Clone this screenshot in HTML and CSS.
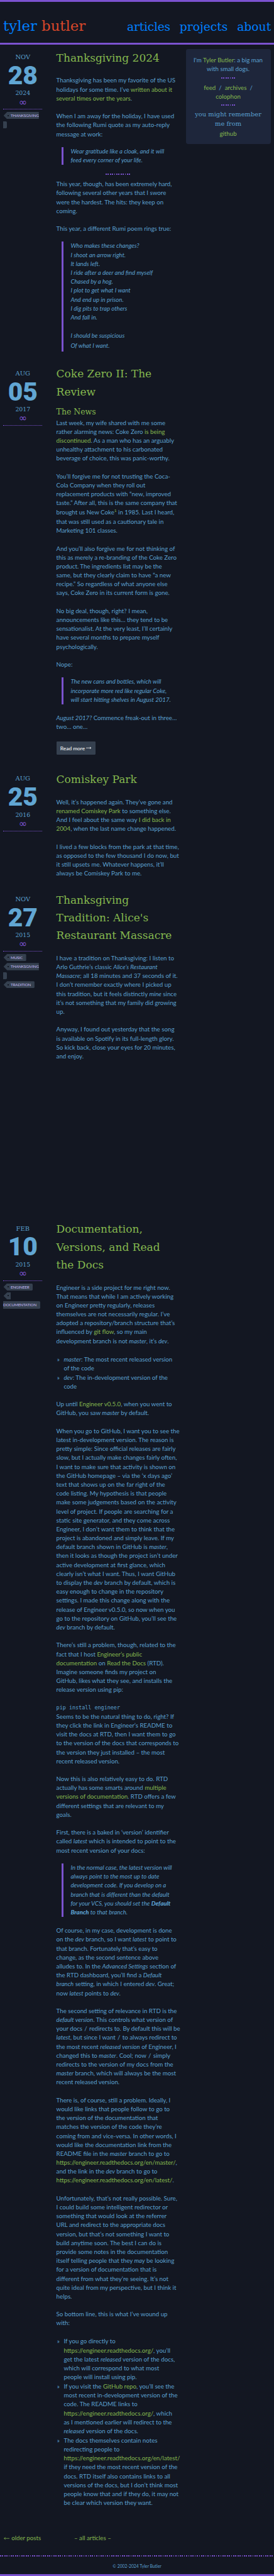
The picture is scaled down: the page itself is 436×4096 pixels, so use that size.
FILE: index.html
```
<!DOCTYPE html>
<html lang="en">
<head>
<meta charset="utf-8">
<title>tyler butler</title>
<link rel="stylesheet" href="styles.css">
</head>
<body>
<header class="site-header">
  <a class="brand">tyler <span class="brand-last">butler</span></a>
  <nav class="site-nav"><a class="nav-articles">articles</a><a class="nav-projects">projects</a><a class="nav-about">about</a></nav>
</header>

<div class="layout">
<main class="posts">

<article class="post post-thanksgiving">
  <aside class="meta">
    <div class="month">NOV</div><div class="day">28</div><div class="year">2024</div><a class="permalink">∞</a>
    <div class="tags"><span class="tag tag-cut">THANKSGIVING</span><span class="tag-end"></span></div>
  </aside>
  <div class="body">
    <h2>Thanksgiving 2024</h2>
    <p>Thanksgiving has been my favorite of the US<br>holidays for some time. I’ve <a>written about it<br>several times over the years</a>.</p>
    <p>When I am away for the holiday, I have used<br>the following Rumi quote as my auto-reply<br>message at work:</p>
    <blockquote><p>Wear gratitude like a cloak, and it will<br>feed every corner of your life.</p></blockquote>
    <hr class="dots">
    <p>This year, though, has been extremely hard,<br>following several other years that I swore<br>were the hardest. The hits: they keep on<br>coming.</p>
    <p>This year, a different Rumi poem rings true:</p>
    <blockquote class="poem"><p>Who makes these changes?<br>I shoot an arrow right.<br>It lands left.<br>I ride after a deer and find myself<br>Chased by a hog.<br>I plot to get what I want<br>And end up in prison.<br>I dig pits to trap others<br>And fall in.</p><p>I should be suspicious</p><p class="last-line">Of what I want.</p></blockquote>
  </div>
</article>

<article class="post post-coke">
  <aside class="meta">
    <div class="month">AUG</div><div class="day">05</div><div class="year">2017</div><a class="permalink">∞</a>
    <div class="tags"></div>
  </aside>
  <div class="body">
    <h2>Coke Zero II: The<br>Review</h2>
    <h3>The News</h3>
    <p>Last week, my wife shared with me some<br>rather alarming news: Coke Zero <a>is being<br>discontinued</a>. As a man who has an arguably<br>unhealthy attachment to his carbonated<br>beverage of choice, this was panic-worthy.</p>
    <p>You’ll forgive me for not trusting the Coca-<br>Cola Company when they roll out<br>replacement products with “new, improved<br>taste.” After all, this is the same company that<br><span class="noted">brought us New Coke<sup><a>1</a></sup> in 1985. Last I heard,</span>that was still used as a cautionary tale in<br>Marketing 101 classes.</p>
    <p>And you’ll also forgive me for not thinking of<br>this as merely a re-branding of the Coke Zero<br>product. The ingredients list may be the<br>same, but they clearly claim to have “a new<br>recipe.” So regardless of what anyone else<br>says, Coke Zero in its current form is gone.</p>
    <p>No big deal, though, right? I mean,<br>announcements like this… they tend to be<br>sensationalist. At the very least, I’ll certainly<br>have several months to prepare myself<br>psychologically.</p>
    <p>Nope:</p>
    <blockquote><p>The new cans and bottles, which will<br>incorporate more red like regular Coke,<br>will start hitting shelves in August 2017.</p></blockquote>
    <p><em>August 2017?</em> Commence freak-out in three…<br>two… one…</p>
    <a class="read-more"><span>Read more</span><svg class="arrow" viewBox="0 0 15 8"><path d="M0 4H14M10.5 1.5L14 4L10.5 6.5"/></svg></a>
  </div>
</article>

<article class="post post-comiskey">
  <aside class="meta">
    <div class="month">AUG</div><div class="day">25</div><div class="year">2016</div><a class="permalink">∞</a>
    <div class="tags"></div>
  </aside>
  <div class="body">
    <h2>Comiskey Park</h2>
    <p>Well, it’s happened again. They’ve gone and<br><a>renamed Comiskey Park</a> to something else.<br>And I feel about the same way <a>I did back in<br>2004</a>, when the last name change happened.</p>
    <p>I lived a few blocks from the park at that time,<br>as opposed to the few thousand I do now, but<br>it still upsets me. Whatever happens, it’ll<br>always be Comiskey Park to me.</p>
  </div>
</article>

<article class="post post-alice">
  <aside class="meta">
    <div class="month">NOV</div><div class="day">27</div><div class="year">2015</div><a class="permalink">∞</a>
    <div class="tags"><span class="tag">MUSIC</span><span class="tag tag-cut">THANKSGIVING</span><span class="tag-end"></span><span class="tag">TRADITION</span></div>
  </aside>
  <div class="body">
    <h2>Thanksgiving<br>Tradition: Alice's<br>Restaurant Massacre</h2>
    <p>I have a tradition on Thanksgiving: I listen to<br>Arlo Guthrie’s classic <em>Alice’s Restaurant<br>Massacre</em>; all 18 minutes and 37 seconds of it.<br>I don’t remember exactly where I picked up<br>this tradition, but it feels distinctly <em>mine</em> since<br>it’s not something that my family did growing<br>up.</p>
    <p>Anyway, I found out yesterday that the song<br>is available on Spotify in its full-length glory.<br>So kick back, close your eyes for 20 minutes,<br>and enjoy.</p>
  </div>
</article>

<article class="post post-docs">
  <aside class="meta">
    <div class="month">FEB</div><div class="day">10</div><div class="year">2015</div><a class="permalink">∞</a>
    <div class="tags"><span class="tag">ENGINEER</span><span class="tag tag-start"></span><span class="tag-end tag-end-text">DOCUMENTATION</span></div>
  </aside>
  <div class="body">
    <h2>Documentation,<br>Versions, and Read<br>the Docs</h2>
    <p>Engineer is a side project for me right now.<br>That means that while I am actively working<br>on Engineer pretty regularly, releases<br>themselves are not necessarily regular. I’ve<br>adopted a repository/branch structure that’s<br>influenced by <a>git flow</a>, so my main<br>development branch is not <em>master</em>, it’s <em>dev</em>.</p>
    <ul>
      <li><em>master</em>: The most recent released version<br>of the code</li>
      <li><em>dev</em>: The in-development version of the<br>code</li>
    </ul>
    <p>Up until <a>Engineer v0.5.0</a>, when you went to<br>GitHub, you saw <em>master</em> by default.</p>
    <p>When you go to GitHub, I want you to see the<br>latest in-development version. The reason is<br>pretty simple: Since official releases are fairly<br>slow, but I actually make changes fairly often,<br>I want to make sure that activity is shown on<br>the GitHub homepage – via the ‘x days ago’<br>text that shows up on the far right of the<br>code listing. My hypothesis is that people<br>make some judgements based on the activity<br>level of project. If people are searching for a<br>static site generator, and they come across<br>Engineer, I don’t want them to think that the<br>project is abandoned and simply leave. If my<br>default branch shown in GitHub is <em>master</em>,<br>then it looks as though the project isn’t under<br>active development at first glance, which<br>clearly isn’t what I want. Thus, I want GitHub<br>to display the <em>dev</em> branch by default, which is<br>easy enough to change in the repository<br>settings. I made this change along with the<br>release of Engineer v0.5.0, so now when you<br>go to the repository on GitHub, you’ll see the<br><em>dev</em> branch by default.</p>
    <p>There’s still a problem, though, related to the<br>fact that I host <a>Engineer’s public<br>documentation</a> on <a>Read the Docs</a> (RTD).<br>Imagine someone finds my project on<br>GitHub, likes what they see, and installs the<br>release version using pip:</p>
    <pre>pip install engineer</pre>
    <p class="after-code">Seems to be the natural thing to do, right? If<br>they click the link in Engineer’s README to<br>visit the docs at RTD, then I want them to go<br>to the version of the docs that corresponds to<br>the version they just installed – the most<br>recent released version.</p>
    <p>Now this is also relatively easy to do. RTD<br>actually has some smarts around <a>multiple<br>versions of documentation</a>. RTD offers a few<br>different settings that are relevant to my<br>goals.</p>
    <p>First, there is a baked in ‘version’ identifier<br>called <em>latest</em> which is intended to point to the<br>most recent version of your docs:</p>
    <blockquote><p>In the normal case, the latest version will<br>always point to the most up to date<br>development code. If you develop on a<br>branch that is different than the default<br>for your VCS, you should set the <strong>Default<br>Branch</strong> to that branch.</p></blockquote>
    <p>Of course, in my case, development is done<br>on the <em>dev</em> branch, so I want <em>latest</em> to point to<br>that branch. Fortunately that’s easy to<br>change, as the second sentence above<br>alludes to. In the <em>Advanced Settings</em> section of<br>the RTD dashboard, you’ll find a <em>Default<br>branch</em> setting, in which I entered <em>dev</em>. Great;<br>now <em>latest</em> points to <em>dev</em>.</p>
    <p>The second setting of relevance in RTD is the<br><em>default version</em>. This controls what version of<br>your docs <i class="slash">/</i> redirects to. By default this will be<br><em>latest</em>, but since I want <i class="slash">/</i> to always redirect to<br>the most recent <em>released version</em> of Engineer, I<br>changed this to <em>master</em>. Cool; now <i class="slash">/</i> simply<br>redirects to the version of my docs from the<br><em>master</em> branch, which will always be the most<br>recent released version.</p>
    <p>There is, of course, still a problem. Ideally, I<br>would like links that people follow to go to<br>the version of the documentation that<br>matches the version of the code they’re<br>coming from and vice-versa. In other words, I<br>would like the documentation link from the<br>README file in the <em>master</em> branch to go to<br><a>https://engineer.readthedocs.org/en/master/</a>,<br>and the link in the <em>dev</em> branch to go to<br><a>https://engineer.readthedocs.org/en/latest/</a>.</p>
    <p>Unfortunately, that’s not really possible. Sure,<br>I could build some intelligent redirector or<br>something that would look at the referrer<br>URL and redirect to the appropriate docs<br>version, but that’s not something I want to<br>build anytime soon. The best I can do is<br>provide some notes in the documentation<br>itself telling people that they <em>may</em> be looking<br>for a version of documentation that is<br>different from what they’re seeing. It’s not<br>quite ideal from my perspective, but I think it<br>helps.</p>
    <p>So bottom line, this is what I’ve wound up<br>with:</p>
    <ul>
      <li>If you go directly to<br><a>https://engineer.readthedocs.org/</a>, you’ll<br>get the latest <em>released</em> version of the docs,<br>which will correspond to what most<br>people will install using pip.</li>
      <li>If you visit the <a>GitHub repo</a>, you’ll see the<br>most recent in-development version of the<br>code. The README links to<br><a>https://engineer.readthedocs.org/</a>, which<br>as I mentioned earlier will redirect to the<br><em>released</em> version of the docs.</li>
      <li>The docs themselves contain notes<br>redirecting people to<br><a>https://engineer.readthedocs.org/en/latest/</a><br>if they need the most recent version of the<br>docs. RTD itself also contains links to all<br>versions of the docs, but I don’t think most<br>people know that and if they do, it may not<br>be clear which version they want.</li>
    </ul>
  </div>
</article>
</main>

<aside class="card">
  <p>I'm <a>Tyler Butler</a>: a big man<br>with small dogs.</p>
  <hr class="dots">
  <p><a>feed</a>&nbsp; / &nbsp;<a>archives</a>&nbsp; /<br><a>colophon</a></p>
  <hr class="dots">
  <p class="remember">you might remember<br>me from</p>
  <p><a>github</a></p>
</aside>
</div>

<div class="pager"><a class="older"><svg class="arrow" viewBox="0 0 17 8"><path d="M17 4H1M5 1L1 4L5 7"/></svg>older posts</a><a>– all articles –</a></div>
<footer class="site-footer">© 2002-2024 Tyler Butler</footer>
</body>
</html>
```
FILE: styles.css
```
/* 1rem = ten layout units */
html {
  font-size: 5.673px;
  background: #131722;
}

body {
  margin: 0;
  height: 4096px;
  box-sizing: border-box;
  border-top: 3px solid #7b52cf;
  border-bottom: 3px solid #7b52cf;
  display: flex;
  flex-direction: column;
  overflow: hidden;
  background: #131722;
  color: #5ba0d0;
  font-family: Lato, "Open Sans", sans-serif;
  font-size: 1.714rem;
  line-height: 2.5rem;
  white-space: nowrap;
}

h2, h3, p, ul, pre, blockquote, hr { margin: 0; padding: 0; }

a { color: #84b84e; }

blockquote { font-style: italic; font-size: 1.695rem; }

/* Inline runs keep out of the line box so every line stays 2.5rem tall */
em, strong, .slash { line-height: 0; }
em { font-style: italic; font-size: 1.695rem; }
strong { font-weight: 900; }

/* Header */
.site-header {
  flex: none;
  box-sizing: border-box;
  height: 11.9rem;
  border-bottom: 3px solid #7b52cf;
  display: flex;
  justify-content: space-between;
  align-items: baseline;
  padding: 4.15rem .85rem 0 .9rem;
  font-family: "DejaVu Serif", serif;
}

.site-header a { color: #007fff; }
.brand { font-size: 4.02rem; line-height: 5rem; }
.brand-last { color: #d8472a; }
.site-nav { display: flex; gap: 2.6rem; font-size: 3.3rem; line-height: 4rem; }
.nav-articles { letter-spacing: -.04rem; }

/* Layout */
.layout {
  flex: none;
  display: grid;
  grid-template-columns: 52.1rem 23.8rem;
  align-items: start;
  padding-top: 1.3rem;
  height: 697.6rem;
  box-sizing: border-box;
}

.post {
  display: grid;
  grid-template-columns: 11rem 1fr;
  column-gap: 3.9rem;
  padding-left: .9rem;
}

.post-thanksgiving { height: 88.6rem; }
.post-coke { height: 113.65rem; }
.post-comiskey { height: 33.75rem; }
.post-alice { height: 92.3rem; }

.body h2 {
  font: 400 3rem/5rem "DejaVu Serif", serif;
  color: #84b84e;
  margin-bottom: 2.5rem;
}

.body h3 {
  font: 400 2.2rem/2.5rem "DejaVu Serif", serif;
  color: #84b84e;
  margin: -.6rem 0 .45rem;
}

.body > p { margin-bottom: 2.5rem; }

blockquote {
  margin: 0 0 2.5rem 1.5rem;
  border-left: 3px solid #7b52cf;
  padding-left: 2rem;
}

.poem p + p { margin-top: 2.6rem; }
.poem .last-line { margin-top: .4rem; padding-bottom: .3rem; }

.dots {
  border: 0;
  height: 2px;
  width: 6.9rem;
  background: repeating-linear-gradient(90deg, #7b52cf 0 .3rem, transparent .3rem .6rem);
}

.body .dots { margin: 0 auto 1.2rem 13.8rem; }

.noted { display: block; height: 2.72rem; }
sup { font-size: 1.15rem; line-height: 0; vertical-align: .65rem; }

ul { list-style: none; padding-left: 2.1rem; margin-bottom: 2.5rem; }
li { padding-top: .12rem; }
li::before { content: "»"; float: left; margin-left: -1.9rem; }

pre {
  font: 1.487rem/2.5rem "DejaVu Sans Mono", monospace;
}

.slash { font-style: normal; padding: 0 .15rem; }

.read-more {
  display: inline-flex;
  align-items: center;
  gap: .4rem;
  height: 3.7rem;
  padding: 0 1.1rem;
  margin-top: .45rem;
  border-radius: .2rem;
  background: #35404f;
  color: #fff;
  font-size: 1.48rem;
}

.arrow { fill: none; stroke: currentColor; stroke-width: 1.3; }
.read-more .arrow { width: 1.5rem; height: .8rem; }

/* Date column */
.meta {
  text-align: center;
  padding-top: 1.1rem;
  font-family: "DejaVu Serif", serif;
  font-size: 1.75rem;
}

.day { font: 900 7.2rem/5rem Roboto, sans-serif; color: #61a6d3; margin: 1.35rem 0 1.25rem; }
.year { font-size: 1.65rem; }

.permalink {
  display: block;
  height: 3.1rem;
  border-bottom: 1px dotted #7b52cf;
  color: #7b52cf;
  font: 2.8rem/2.6rem "DejaVu Sans", sans-serif;
}

.tags {
  display: flex;
  flex-direction: column;
  align-items: flex-start;
  gap: .54rem;
  padding-top: .7rem;
  font: 1.1rem/2rem Lato, sans-serif;
  letter-spacing: -.025rem;
  color: #c5bdf5;
}

.tag {
  box-sizing: border-box;
  height: 2rem;
  margin-left: .1rem;
  padding: 0 1rem 0 2rem;
  border-radius: .3rem;
  background: linear-gradient(#131722, #131722) no-repeat 1.1rem .8rem / .4rem .4rem, #35404f;
  clip-path: polygon(0 50%, 1rem 0, 100% 0, 100% 100%, 1rem 100%);
}

.tag-cut { padding-right: 0; border-radius: 0; }
.tag-start { width: 2rem; padding: 0; border-radius: 0; }
.tag-end { width: 1rem; height: 2rem; background: #35404f; border-radius: 0 .3rem .3rem 0; }
.tag-end-text { width: auto; padding-right: 1rem; }

/* Intro card */
.card {
  height: 26.7rem;
  box-sizing: border-box;
  padding-top: 1.8rem;
  border-radius: .6rem;
  background: #1e263b;
  text-align: center;
}

.card .dots { width: 3.9rem; margin: .65rem auto 1.25rem; }
.card p + .dots { margin-top: 1.1rem; }
.remember { font: 1.75rem/2.5rem "DejaVu Serif", serif; margin-bottom: .15rem; }

/* Pager and footer */
.pager {
  flex: none;
  display: grid;
  grid-template-columns: 19.8rem auto;
  padding-left: 1rem;
}

.older .arrow { width: 1.7rem; height: .8rem; margin-right: .5rem; }

.site-footer {
  margin-top: auto;
  height: 5.25rem;
  box-sizing: border-box;
  padding-top: 1.7rem;
  text-align: center;
  font-size: 1.2rem;
  background: repeating-linear-gradient(90deg, #7b52cf 0 .3rem, transparent .3rem .6rem) 0 0 / 100% 2px no-repeat;
}
```
